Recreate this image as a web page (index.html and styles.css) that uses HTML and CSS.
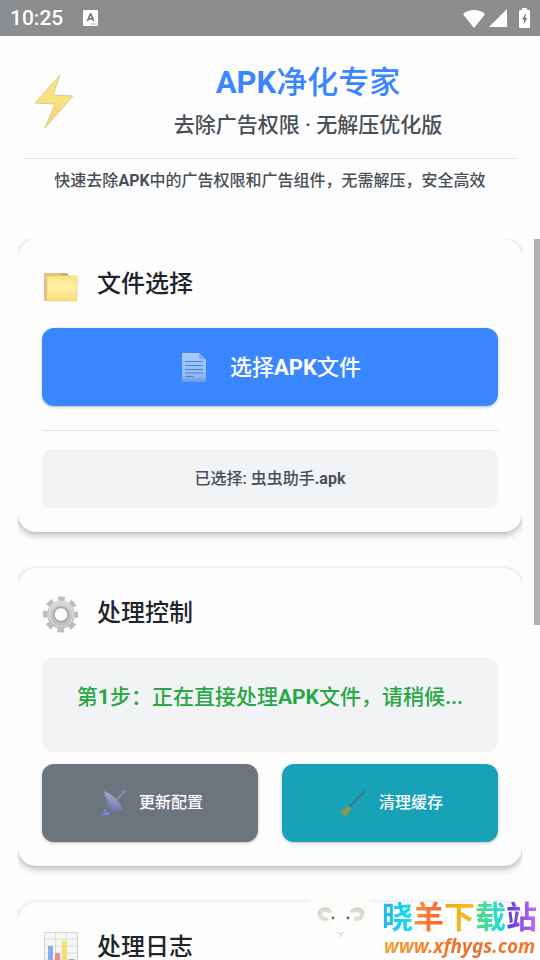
FILE: index.html
```html
<!DOCTYPE html>
<html lang="zh-CN">
<head>
<meta charset="utf-8">
<meta name="viewport" content="width=device-width, initial-scale=1">
<title>APK净化专家</title>
<link rel="stylesheet" href="styles.css">
</head>
<body>
<div class="statusbar">
  <span class="clock">10:25</span>
  <svg class="ime" viewBox="0 0 15 16" width="15" height="16" aria-hidden="true">
    <rect width="15" height="16" rx="1.5" fill="#fff"/>
    <path d="M4.4 11 7.3 4h.6l2.9 7M5.4 8.8h4.4" fill="none" stroke="#77787a" stroke-width="1.7"/>
    <path d="M8 14h1.200M10.200 14h1.200M12.400 14h1.200" stroke="#77787a" stroke-width="1.2"/>
  </svg>
  <span class="system">
    <svg viewBox="0 0 22 19" width="22" height="19" aria-hidden="true"><path d="M11 19 0 5.200Q4.500 1 11 1T22 5.200Z" fill="#fff"/></svg>
    <svg viewBox="0 0 18 18" width="18" height="18" aria-hidden="true"><path d="M18 0V18H0Z" fill="#fff"/></svg>
    <svg class="battery" viewBox="0 0 11 20" width="11" height="20" aria-hidden="true"><path d="M3 0H8V2H9.500Q11 2 11 3.500V18.500Q11 20 9.500 20H1.500Q0 20 0 18.500V3.500Q0 2 1.500 2H3Z" fill="#fff"/><path d="M7 5 3 11.500H5.200L4.400 17 8.200 10H6.200Z" fill="#77787a"/></svg>
  </span>
</div>

<header class="app-header">
  <div class="brand">
    <svg class="bolt" viewBox="0 1 40 54" width="60" height="54" aria-hidden="true">
      <defs><linearGradient id="boltFill" x1="0" y1="0" x2="0" y2="1"><stop offset="0" stop-color="#f5ea7c"/><stop offset=".55" stop-color="#fbdf7e"/><stop offset="1" stop-color="#f0ca70"/></linearGradient></defs>
      <path d="M26 1 1 29 21 30 11 54 39 22 19 21Z" fill="url(#boltFill)" stroke="#d9cd96" stroke-width="1" stroke-linejoin="round"/>
    </svg>
    <div class="titles">
      <h1><b>APK</b>净化专家</h1>
      <p class="subtitle">去除广告权限 · 无解压优化版</p>
    </div>
  </div>
  <p class="description">快速去除<b>APK</b>中的广告权限和广告组件，无需解压，安全高效</p>
</header>

<div class="viewport">
  <main class="cards">
    <section class="card">
      <h2>
        <svg viewBox="0 -5 36 42" width="36" height="42" aria-hidden="true">
          <defs><linearGradient id="folderFill" x1="0" y1="0" x2="0" y2="1"><stop offset="0" stop-color="#fbe58a"/><stop offset=".5" stop-color="#fff0a2"/><stop offset="1" stop-color="#fbdc80"/></linearGradient></defs>
          <path d="M2 5H25L27 8H34V32H2Z" fill="#ebc27c"/>
          <path d="M19 5H25L27 8H20Z" fill="#c5ac91"/>
          <path d="M5 8H35V33H5Z" fill="url(#folderFill)" stroke="#ecd07a" stroke-width=".7"/>
          <path d="M2 6 5 9V33H2Z" fill="#e8c08a"/>
        </svg>
        文件选择
      </h2>
      <button class="btn btn-primary" type="button">
        <svg viewBox="0 0 26 36" width="26" height="36" aria-hidden="true">
          <defs><linearGradient id="docFill" x1="0" y1="0" x2="0" y2="1"><stop offset="0" stop-color="#a7ccff"/><stop offset=".75" stop-color="#93bcfb"/><stop offset="1" stop-color="#6c9ce2"/></linearGradient></defs>
          <g transform="translate(0 4)">
            <path d="M1 2H18L25 9V31H1Z" fill="url(#docFill)"/>
            <path d="M18 2V8H25Z" fill="#7eaaf0"/>
            <path d="M4 10.500H22M4 14.500H22M4 18.500H22M4 22H22M4 25.500H12" stroke="#557fcb" stroke-width="1.100"/>
          </g>
        </svg>
        <span>选择<b>APK</b>文件</span>
      </button>
      <div class="selected">已选择: 虫虫助手<b>.apk</b></div>
    </section>

    <section class="card">
      <h2>
        <svg viewBox="0 -4 36 42" width="36" height="42" aria-hidden="true">
          <defs><linearGradient id="gearFill" x1="0" y1="0" x2="0" y2="1"><stop offset="0" stop-color="#d6d6d6"/><stop offset="1" stop-color="#bdbdbd"/></linearGradient></defs>
          <path fill="none" stroke="#bdbdbd" stroke-width="7" stroke-linejoin="round" stroke-dasharray="6.200 5.190" stroke-dashoffset="3.100" d="M33 18.500A14.500 14.500 0 1 1 4 18.500 14.500 14.500 0 1 1 33 18.500Z" transform="translate(.5 0)"/>
          <circle cx="19" cy="18.500" r="10.500" fill="none" stroke="url(#gearFill)" stroke-width="7"/>
          <circle cx="19" cy="18.500" r="7.300" fill="none" stroke="#acacac" stroke-width="2.200"/>
          <circle cx="19" cy="18.500" r="12" fill="none" stroke="#dedede" stroke-width="1"/>
        </svg>
        处理控制
      </h2>
      <div class="progress" role="status">第<b>1</b>步：正在直接处理<b>APK</b>文件，请稍候<b>...</b></div>
      <div class="actions">
        <button class="btn btn-gray" type="button">
          <svg viewBox="0 -5 28 35" width="28" height="35" aria-hidden="true">
            <defs><linearGradient id="dishFill" x1="0" y1="0" x2="0" y2="1"><stop offset="0" stop-color="#a0adc2"/><stop offset="1" stop-color="#7782b8"/></linearGradient></defs>
            <path d="M1 27 5 18 12 25 11 27Z" fill="#6672aa"/>
            <path d="M5 20 9 26M3 25H10" stroke="#9099c4"/>
            <path d="M5 2Q6 12 9 17 14 24 23 21 18 20 13 14T5 2Z" fill="#7580b2"/>
            <path d="M5 2Q13 5 18 11T23 21Q17 20 12 15T5 2Z" fill="url(#dishFill)"/>
            <path d="M15 13 25 3" stroke="#8f99b2" stroke-width="1.200"/><circle cx="25" cy="2.500" r="1.600" fill="#8590b0"/>
          </svg>
          更新配置
        </button>
        <button class="btn btn-teal" type="button">
          <svg viewBox="0 -5 28 35" width="28" height="35" aria-hidden="true">
            <path d="M10 18 26 2" stroke="#476e68" stroke-width="1.400"/>
            <path d="M9 17 12 20Q9 24 7 28L0 22Q5 21 9 17Z" fill="#7f9856"/>
            <path d="M9 19 3 23M10 20 5 25M8 17 12 21" stroke="#a19543" stroke-width=".9"/>
          </svg>
          清理缓存
        </button>
      </div>
    </section>

    <section class="card">
      <h2>
        <svg viewBox="0 -5 36 42" width="36" height="42" aria-hidden="true">
          <rect x="2.500" y="1.500" width="33" height="33" fill="#f6f6f6" stroke="#d5d5d5"/>
          <path d="M3 8H35M3 15H35M3 22H35M3 29H35M13.500 2V34M24.500 2V34" stroke="#dcdcdc"/>
          <path d="M6 15h5v19H6Z" fill="#8cabef"/><path d="M13 22h5v12h-5Z" fill="#ee8f86"/><path d="M20 10h5v24h-5Z" fill="#fadb75"/><path d="M27 28h5v6h-5Z" fill="#79bd97"/>
        </svg>
        处理日志
      </h2>
    </section>
  </main>
  <div class="scroll-thumb"></div>
</div>

<div class="watermark">
  <svg viewBox="0 0 64 66" width="64" height="66" aria-hidden="true">
    <path d="M2 5H62V64H2Z" fill="#fdfdfc"/>
    <path d="M20 15Q33 5 46 15L45 30Q40 44 33 44 26 44 21 30Z" fill="#fefefd" stroke="#f8f7f5" stroke-width=".8"/>
    <g fill="none" stroke="#dedcd4" stroke-width="4" stroke-linecap="round"><path d="M22 17Q14 14 12 20 12 25 18 25"/><path d="M44 17Q52 14 54 20 54 25 48 25"/></g>
    <g fill="none" stroke="#c4c1b6" stroke-width="1"><path d="M21 15Q11 12 10 20"/><path d="M45 15Q55 12 56 20"/></g>
    <circle cx="25" cy="24" r="1.400" fill="#666"/><circle cx="40" cy="24" r="1.400" fill="#666"/>
    <path d="M29 38 32.500 40 36 38M32.500 40V43" fill="none" stroke="#d8c9c2"/>
  </svg>
  <div class="site">
    <span class="site-name"><span class="c1">晓</span><span class="c2">羊</span><span class="c3">下</span><span class="c4">载</span><span class="c5">站</span></span>
    <a class="site-url" href="#">www.xfhygs.com</a>
  </div>
</div>
</body>
</html>
```
FILE: styles.css
```css
* { box-sizing: border-box; }

body {
  margin: 0;
  height: 100vh;
  display: flex;
  flex-direction: column;
  overflow: hidden;
  position: relative;
  background: #fdfdfd;
  color: #212529;
  font-family: Roboto, "Noto Sans CJK SC", sans-serif;
  font-weight: 500;
}

h1, h2, p { margin: 0; }
b { font-weight: 700; }
svg { display: block; flex: none; }

.statusbar {
  display: flex;
  align-items: center;
  height: 36px;
  flex: none;
  padding: 0 10px;
  background: #8c8d8f;
  color: #fff;
}
.clock { font-size: 21px; line-height: 36px; }
.ime { margin-left: 20px; }
.system { display: flex; align-items: center; gap: 4px; margin-left: auto; }
.battery { margin-left: 8px; }

.app-header { flex: none; padding: 24px 24px 36px; text-align: center; }
.brand {
  display: flex;
  align-items: center;
  gap: 16px;
  padding-bottom: 14px;
  border-bottom: 1px solid #dfe0e1;
}
.titles { flex: 1; }
h1 { font-size: 31px; line-height: 46px; font-weight: 500; color: #3a86ff; }
.subtitle { font-size: 21px; line-height: 38px; color: #495057; }
.description { font-size: 16px; line-height: 44px; color: #495057; }

.viewport { flex: 1; min-height: 0; position: relative; overflow: hidden; }
.cards {
  display: flex;
  flex-direction: column;
  gap: 36px;
  margin: 0 18px;
  height: 100%;
  overflow: hidden;
}
.card {
  flex: none;
  padding: 24px;
  border-radius: 18px;
  background: #fdfdfd;
  box-shadow: 0 3px 6px rgba(0, 0, 0, .22), 0 4px 12px rgba(0, 0, 0, .05), 0 0 2px rgba(0, 0, 0, .12);
}
h2 {
  display: flex;
  align-items: flex-start;
  gap: 19px;
  height: 42px;
  margin-bottom: 23px;
  font-size: 24px;
  line-height: 43px;
  font-weight: 500;
}

.btn {
  display: flex;
  align-items: center;
  justify-content: center;
  width: 100%;
  height: 78px;
  padding: 0 0 4px 2px;
  border: 0;
  border-radius: 12px;
  color: #fff;
  font-family: inherit;
  font-weight: 500;
  box-shadow: 0 1px 3px rgba(0, 0, 0, .25);
}
.btn-primary { gap: 23px; background: #3a86ff; font-size: 22px; }
.btn-gray, .btn-teal { gap: 12px; font-size: 16px; }
.btn-gray { background: #6c757d; }
.btn-teal { background: #17a2b8; }

.selected {
  position: relative;
  margin-top: 43px;
  border-radius: 9px;
  background: #f1f3f5;
  color: #495057;
  font-size: 16px;
  line-height: 59px;
  text-align: center;
}
.selected::before {
  content: "";
  position: absolute;
  left: 0;
  right: 0;
  top: -19px;
  height: 1px;
  background: #e1e2e3;
}

.progress {
  height: 95px;
  border-radius: 12px;
  background: #f1f3f5;
  color: #28a745;
  font-size: 21px;
  line-height: 80px;
  text-align: center;
}
.actions { display: grid; grid-template-columns: 1fr 1fr; gap: 24px; margin-top: 12px; }

.scroll-thumb {
  position: absolute;
  top: 0;
  right: 0;
  width: 6px;
  height: 386px;
  background: #b1b1b1;
}

.watermark { position: absolute; right: 3px; bottom: 0; display: flex; align-items: flex-end; gap: 10px; }
.site { display: flex; flex-direction: column; align-items: center; }
.site-name { display: flex; font-size: 31px; line-height: 36px; font-weight: 700; }
.site-name span { background-clip: text; -webkit-background-clip: text; color: transparent; }
.c1 { background-image: linear-gradient(90deg, #25b5ee, #12e4ea); }
.c2 { background-image: linear-gradient(90deg, #ff9040, #f2602c); }
.c3 { background-image: linear-gradient(90deg, #efa91d, #f7bf20); }
.c4 { background-image: linear-gradient(90deg, #52dd78, #19dbe0); }
.c5 { background-image: linear-gradient(90deg, #5638d8, #c96af0); }
.site-url {
  padding-bottom: 4px;
  font: italic 700 19px/20px "Noto Sans", sans-serif;
  text-decoration: none;
  color: transparent;
  background: linear-gradient(90deg, #f5a02c, #ee6f2b 50%, #ee7a2d);
  background-clip: text;
  -webkit-background-clip: text;
}
```
